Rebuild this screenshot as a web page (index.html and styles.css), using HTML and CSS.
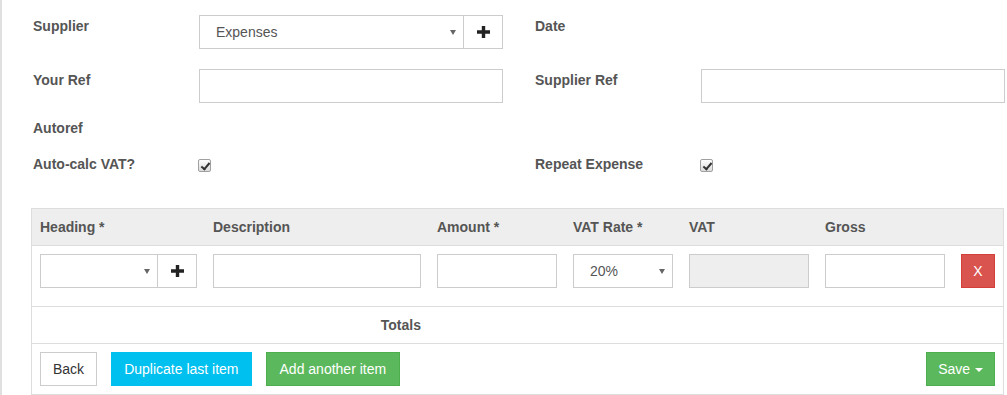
FILE: index.html
```html
<!DOCTYPE html>
<html lang="en">
<head>
    <meta charset="UTF-8">
    <meta name="viewport" content="width=device-width, initial-scale=1.0">
    <title>New Expense</title>
    <link rel="stylesheet" href="styles.css">
</head>
<body>
    <div class="page">
        <form class="expense-form">
            <div class="form-row row-supplier">
                <div class="half">
                    <label class="field-label">Supplier</label>
                    <div class="field input-group">
                        <div class="select-wrap">
                            <select class="control select-control">
                                <option>Expenses</option>
                            </select>
                        </div>
                        <button type="button" class="addon">
                            <svg class="plus" viewBox="0 0 13 12"><path d="M4.8 0h3.4v4.3H13v3.4H8.2V12H4.8V7.7H0V4.3h4.8z"/></svg>
                        </button>
                    </div>
                </div>
                <div class="half">
                    <label class="field-label">Date</label>
                    <div class="field"></div>
                </div>
            </div>

            <div class="form-row row-ref">
                <div class="half">
                    <label class="field-label">Your Ref</label>
                    <div class="field"><input type="text" class="control"></div>
                </div>
                <div class="half">
                    <label class="field-label">Supplier Ref</label>
                    <div class="field"><input type="text" class="control"></div>
                </div>
            </div>

            <div class="form-row row-autoref">
                <div class="half">
                    <label class="field-label">Autoref</label>
                    <div class="field"></div>
                </div>
            </div>

            <div class="form-row row-checks">
                <div class="half">
                    <label class="field-label">Auto-calc VAT?</label>
                    <div class="field"><input type="checkbox" class="check" checked></div>
                </div>
                <div class="half">
                    <label class="field-label">Repeat Expense</label>
                    <div class="field"><input type="checkbox" class="check" checked></div>
                </div>
            </div>
        </form>

        <div class="items">
            <div class="items-row items-head">
                <div class="cell">Heading *</div>
                <div class="cell">Description</div>
                <div class="cell">Amount *</div>
                <div class="cell">VAT Rate *</div>
                <div class="cell">VAT</div>
                <div class="cell">Gross</div>
                <div class="cell"></div>
            </div>

            <div class="items-row items-line">
                <div class="cell">
                    <div class="input-group">
                        <div class="select-wrap">
                            <select class="control select-control"><option></option></select>
                        </div>
                        <button type="button" class="addon">
                            <svg class="plus" viewBox="0 0 13 12"><path d="M4.8 0h3.4v4.3H13v3.4H8.2V12H4.8V7.7H0V4.3h4.8z"/></svg>
                        </button>
                    </div>
                </div>
                <div class="cell"><input type="text" class="control"></div>
                <div class="cell"><input type="text" class="control"></div>
                <div class="cell">
                    <div class="select-wrap">
                        <select class="control select-control"><option>20%</option></select>
                    </div>
                </div>
                <div class="cell"><input type="text" class="control" readonly></div>
                <div class="cell"><input type="text" class="control"></div>
                <div class="cell cell-remove"><button type="button" class="btn btn-danger btn-remove">X</button></div>
            </div>

            <div class="items-row items-totals">
                <div class="cell totals-label">Totals</div>
                <div class="cell totals-rest"></div>
            </div>

            <div class="items-row items-actions">
                <div class="cell actions">
                    <button type="button" class="btn btn-default">Back</button>
                    <button type="button" class="btn btn-info">Duplicate last item</button>
                    <button type="button" class="btn btn-success btn-add">Add another item</button>
                    <button type="button" class="btn btn-success btn-save">Save <span class="caret"></span></button>
                </div>
            </div>
        </div>
    </div>
</body>
</html>
```

FILE: styles.css
```css
* {
    box-sizing: border-box;
}
body {
    margin: 0;
    font-family: "Liberation Sans", Arial, Helvetica, sans-serif;
    font-size: 14px;
    line-height: 20px;
    color: #555;
    background: #fff;
}
.page {
    min-height: 395px;
    border-left: 2px solid #e0e0e0;
    padding: 15px 2px 0 29px;
}

/* top form */
.expense-form {
    padding-left: 2px;
}
.form-row {
    display: flex;
    gap: 32px;
}
.half {
    display: flex;
    width: 470px;
}
.field-label {
    width: 166px;
    margin-top: 1px;
    font-weight: bold;
    color: #555;
}
.field {
    width: 304px;
}
.row-supplier {
    height: 34px;
    margin-bottom: 20px;
}
.row-ref {
    height: 34px;
    margin-bottom: 14px;
}
.row-autoref {
    height: 20px;
    margin-bottom: 16px;
}
.row-checks {
    height: 20px;
    margin-bottom: 35px;
}

/* inputs */
.control {
    display: block;
    width: 100%;
    height: 34px;
    margin: 0;
    padding: 6px 12px;
    border: 1px solid #ccc;
    border-radius: 0;
    background: #fff;
    font-family: inherit;
    font-size: 14px;
    color: #555;
    outline: none;
}
.control[readonly] {
    background: #eee;
}
.select-wrap {
    position: relative;
    flex: 1;
}
.select-control {
    appearance: none;
    -webkit-appearance: none;
    padding-left: 16px;
}
.select-wrap::after {
    content: "";
    position: absolute;
    right: 8px;
    top: 15px;
    border-left: 3px solid transparent;
    border-right: 3px solid transparent;
    border-top: 5px solid #666;
    pointer-events: none;
}
.input-group {
    display: flex;
}
.addon {
    width: 40px;
    height: 34px;
    margin-left: -1px;
    padding: 0;
    border: 1px solid #ccc;
    background: #fff;
    display: flex;
    align-items: center;
    justify-content: center;
}
.plus {
    width: 13px;
    height: 12px;
    fill: #222;
}
.check {
    appearance: none;
    -webkit-appearance: none;
    position: relative;
    width: 13px;
    height: 13px;
    margin: 6px 0 0 -1px;
    border: 1px solid #a0a0a0;
    border-radius: 2px;
    background: linear-gradient(#fdfdfd, #dcdcdc);
}
.check:checked::after {
    content: "";
    position: absolute;
    left: 3.5px;
    top: 0.5px;
    width: 3px;
    height: 7px;
    border-right: 2px solid #333;
    border-bottom: 2px solid #333;
    transform: rotate(40deg);
}

/* items table */
.items {
    width: 973px;
    border: 1px solid #ddd;
}
.items-row {
    display: grid;
    grid-template-columns: 173px 224px 136px 116px 136px 136px 50px;
    border-bottom: 1px solid #ddd;
}
.items-row:last-child {
    border-bottom: none;
}
.cell {
    padding: 8px;
}
.items-head {
    background: #eee;
    font-weight: bold;
    color: #555;
}
.items-line .cell {
    padding-bottom: 18px;
}
.cell-remove {
    display: flex;
    justify-content: flex-end;
}
.totals-label {
    grid-column: 1 / 3;
    text-align: right;
    font-weight: bold;
    color: #555;
}
.totals-rest {
    grid-column: 3 / 8;
}
.actions {
    grid-column: 1 / 8;
    display: flex;
    gap: 14px;
}

/* buttons */
.btn {
    height: 34px;
    padding: 6px 12px;
    border: 1px solid transparent;
    border-radius: 0;
    font-family: inherit;
    font-size: 14px;
    line-height: 20px;
    cursor: pointer;
}
.btn-default {
    background: #fff;
    border-color: #ccc;
    color: #333;
}
.btn-info {
    background: #00c0ef;
    border-color: #00c0ef;
    color: #fff;
}
.btn-success {
    background: #5cb85c;
    border-color: #4cae4c;
    color: #fff;
}
.btn-danger {
    background: #d9534f;
    border-color: #d43f3a;
    color: #fff;
}
.btn-remove {
    width: 34px;
    padding: 6px 0;
}
.btn-add {
    padding: 6px 13px;
}
.btn-save {
    margin-left: auto;
    padding: 6px 11px;
}
.caret {
    display: inline-block;
    vertical-align: middle;
    margin-left: 1px;
    border-left: 4px solid transparent;
    border-right: 4px solid transparent;
    border-top: 4px solid #fff;
}
```
